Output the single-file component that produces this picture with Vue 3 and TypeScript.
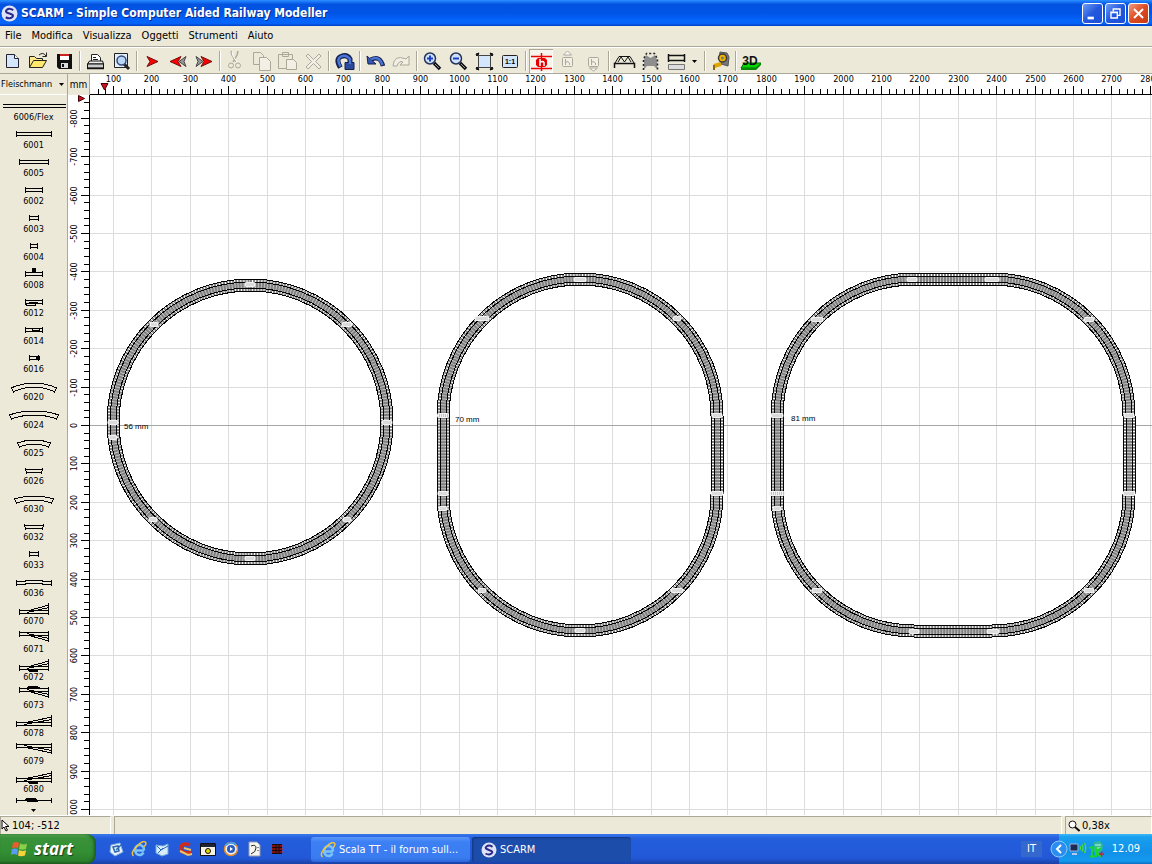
<script setup lang="ts">
interface Tool { name: string; art: string; pressed?: boolean; narrow?: boolean }
interface Part { label: string; art: string }
interface Shape { x: number; y: number; w: number; h: number }

const menus = ['File', 'Modifica', 'Visualizza', 'Oggetti', 'Strumenti', 'Aiuto']

const scissors = '<path d="M8 2l1 4 4 7M15 2l-1 4-4 7" stroke="#aca899" fill="none" stroke-width="1.500"/><path d="M9 3l1 4 4 6" stroke="#fff" fill="none"/><circle cx="8" cy="16.500" r="2.500" fill="none" stroke="#aca899"/><circle cx="15" cy="16.500" r="2.500" fill="none" stroke="#aca899"/>'
const lens = (sign: string) =>
  `<path d="M14 14l6 6" stroke="#111" stroke-width="3.500"/><path d="M15 15l4 4" stroke="#8b93a8" stroke-width="1"/><circle cx="10" cy="9.500" r="5.500" fill="#cfe2fb" stroke="#26335a" stroke-width="1.500"/><path d="${sign}" stroke="#1d3fc0" stroke-width="2" fill="none"/>`

const toolGroups: Tool[][] = [
  [
    { name: 'Nuovo', art: '<path d="M6.500 5.500h8l4 4v9h-12z" fill="#d3e6fb" stroke="#223" /><path d="M14.500 5.500v4h4" fill="#fff" stroke="#223"/>' },
    { name: 'Apri', art: '<path d="M3.500 18.500v-11h5l2 2h6v3" fill="#ffe98a" stroke="#222"/><path d="M3.500 18.500l4-7h13l-4 7z" fill="#ffe86a" stroke="#222"/><path d="M13 6q4-3.500 7 1M20.500 3.500v4h-4" fill="none" stroke="#222"/>' },
    { name: 'Salva', art: '<path d="M5 5h15v15H7l-2-2z" fill="#111"/><path d="M8 5h9v6H8z" fill="#fff"/><path d="M8 5h9v2H8z" fill="#c22"/><path d="M9 14h7v5H9z" fill="#ddd"/><path d="M10 15h2v3h-2z" fill="#111"/>' },
  ],
  [
    { name: 'Stampa', art: '<path d="M8.500 12V5.500h6l3 3V12" fill="#fff" stroke="#222"/><path d="M10 8.500h3M10 10.500h5" stroke="#222"/><path d="M6.500 12h13l1 3H4.500z" fill="#eee" stroke="#111"/><path d="M4.500 15h16v4h-16z" fill="#ccc" stroke="#111"/><path d="M4 19.500h17" stroke="#111" stroke-width="1.500"/>' },
    { name: 'Anteprima', art: '<path d="M5.500 4.500h13v14h-13z" fill="#e4eefb" stroke="#222"/><path d="M15 15l5 5" stroke="#222" stroke-width="3"/><circle cx="12.500" cy="11.500" r="4.500" fill="#b9d8f6" stroke="#36497c" stroke-width="1.500"/>' },
  ],
  [
    { name: 'Avanti', art: '<path d="M7 7.500l11 5-11 5 3-5z" fill="#f00" stroke="#701010"/>' },
    { name: 'Indietro', art: '<path d="M20 7.500l-7 5 7 5-2-5z" fill="#999" stroke="#444"/><path d="M15 7.500l-11 5 11 5-3-5z" fill="#f00" stroke="#701010"/>' },
    { name: 'Successivo', art: '<path d="M4 7.500l7 5-7 5 2-5z" fill="#999" stroke="#444"/><path d="M9 7.500l11 5-11 5 3-5z" fill="#f00" stroke="#701010"/>' },
  ],
  [
    { name: 'Taglia', art: scissors },
    { name: 'Copia', art: '<path d="M4.500 3.500h7l3 3v9h-10z" fill="#ece9d8" stroke="#aca899"/><path d="M10.500 8.500h7l4 4v9h-11z" fill="#f2f0e4" stroke="#aca899"/>' },
    { name: 'Incolla', art: '<path d="M3.500 5.500h14v14h-14zM7.500 3.500h6v4h-6z" fill="#ece9d8" stroke="#aca899"/><path d="M11.500 10.500h7l3 3v7h-10z" fill="#f2f0e4" stroke="#aca899"/>' },
    { name: 'Elimina', art: '<path d="M5 7l2-2 5.500 5.500L18 5l2 2-5.500 5.500L20 18l-2 2-5.500-5.500L7 20l-2-2 5.500-5.500z" fill="#f2f0e4" stroke="#aca899"/>' },
  ],
  [{ name: 'Ruota', art: '<path d="M8.500 18.500Q3 10 9 7.500T18 10v5" fill="none" stroke="#162050" stroke-width="5"/><path d="M13 13.500h9v7h-9z" fill="#2a4a9c" stroke="#162050"/><path d="M8.500 17.500Q4 10 9 7.500T18 10v5" fill="none" stroke="#4a76d8" stroke-width="2.500"/>' }],
  [
    { name: 'Annulla', art: '<path d="M8 10.500Q17 6 20 17" fill="none" stroke="#162050" stroke-width="4.500"/><path d="M4 7l1 8h8z" fill="#3458b8" stroke="#162050"/><path d="M8 10.500Q16 6 19.500 16" fill="none" stroke="#4a76d8" stroke-width="2.500"/>' },
    { name: 'Ripeti', art: '<path d="M20 7v9h-9l3-3q-4-2-6 4H4Q5 5 17 10z" fill="#f2f0e4" stroke="#aca899"/>' },
  ],
  [
    { name: 'Ingrandisci', art: lens('M7 9.500h6M10 6.500v6') },
    { name: 'Riduci', art: lens('M7 9.500h6') },
    { name: 'Adatta', art: '<path d="M6.500 6.500h12v12h-12z" fill="#d3e6fb"/><path d="M4 6.500h17M4 18.500h17M6.500 4v17M18.500 4v17" stroke="#444"/><path d="M4 5l3-1-2 3zM21 5l-3-1 2 3zM4 20l3 1-2-3zM21 20l-3 1 2-3z" fill="#111" stroke="#111"/>' },
    { name: 'Scala 1:1', art: '<rect x="4.500" y="6.500" width="15" height="12" rx="1" fill="#d3e6fb" stroke="#222"/><text x="12" y="15" text-anchor="middle" font-family="Liberation Sans" font-weight="700" font-size="7">1:1</text>' },
  ],
  [
    { name: 'Quota', pressed: true, art: '<path d="M2 7.500h21M2 19.500h21M12.500 4v18" stroke="#e00" stroke-width="1.500"/><path d="M9 9h7l2 2v5l-2 2H9l-2-2v-5z" fill="#e60000"/><path d="M11 10v7M11 13.500q3-2 4 0V17" stroke="#fff" stroke-width="1.500" fill="none"/>' },
    { name: 'Alza', art: '<path d="M12.500 2l4 4h-8z" fill="#fff" stroke="#aca899"/><rect x="7.500" y="8.500" width="10" height="9" rx="1" fill="#f2f0e4" stroke="#aca899"/><path d="M10.500 10v6M10.500 13q3-1 4 1v2" stroke="#aca899" fill="none"/>' },
    { name: 'Abbassa', art: '<path d="M12.500 22l4-3h-8z" fill="#fff" stroke="#aca899"/><rect x="7.500" y="8.500" width="10" height="9" rx="1" fill="#f2f0e4" stroke="#aca899"/><path d="M10.500 10v6M10.500 13q3-1 4 1v2" stroke="#aca899" fill="none"/>' },
  ],
  [
    { name: 'Ponte', art: '<path d="M2.500 19v-4.500h20V19" fill="none" stroke="#111" stroke-width="1.500"/><path d="M3 14l4-6.500h11l4 6.500M6 13l3-5 3.500 5L16 8l3 5" fill="none" stroke="#111"/>' },
    { name: 'Galleria', art: '<path d="M8 6l4.500 3L17 6l2 5v9l-3-3H9l-3 3v-9z" fill="#8e8e8e"/><path d="M5.500 21V10l3-5.500h8l3 5.500v11" fill="none" stroke="#222" stroke-width="1.500" stroke-dasharray="2 2"/>' },
    { name: 'Livelli', art: '<path d="M4 6.500h17M4 11.500h17M4.500 5v8M20.500 5v8" stroke="#111" stroke-width="1.500"/><path d="M4.500 15.500h16v5h-16z" fill="#ddd" stroke="#777"/>' },
    { name: 'Altri livelli', narrow: true, art: '<path d="M2 11h5l-2.500 3z" fill="#000"/>' },
  ],
  [{ name: 'Metro', art: '<path d="M12 3l7 1 2 4-1 9-7-2-2-5z" fill="#777" stroke="#555"/><circle cx="14.500" cy="9" r="4" fill="#f3b400" stroke="#3a3a3a" stroke-width="1.500"/><circle cx="14.500" cy="9" r="1.500" fill="#777"/><path d="M13 15l-7 2" stroke="#e2a500" stroke-width="4"/><path d="M6 16v5" stroke="#8a6a10" stroke-width="2"/>' }],
  [{ name: 'Vista 3D', art: '<path d="M5 14h17l-5 5H2z" fill="#00d800" stroke="#067006"/><path d="M2 19h15l5-5v2l-5 5H2z" fill="#078a07"/><text x="11" y="16" text-anchor="middle" font-family="Liberation Sans" font-weight="700" font-size="12" fill="#111">3D</text>' }],
]

/* ---- track parts list ---- */
const bar = (a: number, b: number, extra = '') =>
  `<path d="M${a} 8.500H${b}M${a} 11.500H${b}M${a + 0.5} 7v6M${b - 0.5} 7v6"/>${extra}`
const arc = (a: number, b: number, end: number, top: number) => {
  const c = 2 * top - end
  return `<path d="M${a} ${end}Q33 ${c} ${b} ${end}M${b - 2} ${end + 4}Q33 ${c + 4} ${a + 2} ${end + 4}M${a} ${end - 1}l3 6M${b} ${end - 1}l-3 6"/>`
}
const flat = (a: number, b: number) =>
  `<path d="M${a} 9.500H${b}M${a + 2} 12.500H${b - 2}M${a + 0.5} 8l1 6M${b - 0.5} 8l-1 6"/>`
const pointUp = (a: number, b: number, box = false) =>
  `<path d="M${a} 10.500H${b}M${a} 13.500H${b}M${a + 0.5} 9v6M${b - 0.5} 3v12M${a + 8} 12.500L${b} 7.500M${a + 10} 10.500L${b} 5"/>` +
  (box ? '<path class="solid" d="M27 14h10l-1 1.500h-7z"/>' : '')
const pointDown = (a: number, b: number, box = false) =>
  `<path d="M${a} 4.500H${b}M${a} 7.500H${b}M${a + 0.5} 3v6M${b - 0.5} 3v11M${a + 8} 5.500L${b} 10.500M${a + 10} 7.500L${b} 13"/>` +
  (box ? '<path class="solid" d="M27 3.500l2-1.500h7l2 1.500z"/>' : '')

const parts: Part[] = [
  { label: '6006/Flex', art: '<path d="M2 8.500H65M2 11.500H65"/>' },
  { label: '6001', art: bar(15, 51) },
  { label: '6005', art: bar(18, 48) },
  { label: '6002', art: bar(24, 42) },
  { label: '6003', art: bar(28, 38) },
  { label: '6004', art: bar(29, 37) },
  { label: '6008', art: bar(24, 42, '<path class="solid" d="M31.500 4.500h3v3h-3z"/>') },
  { label: '6012', art: bar(24, 42, '<path d="M25.500 11.500h9v2h-9zM28 10.500h9"/>') },
  { label: '6014', art: bar(24, 42, '<path d="M31 10.500h8M31.500 9v3M38.500 9v3"/>') },
  { label: '6016', art: bar(28, 38, '<path class="solid" d="M35.500 8.500h3v3h-3z"/>') },
  { label: '6020', art: arc(10, 56, 12, 7) },
  { label: '6024', art: arc(8, 58, 11, 7) },
  { label: '6025', art: arc(16, 50, 11, 8) },
  { label: '6026', art: flat(24, 42) },
  { label: '6030', art: arc(13, 53, 11, 8) },
  { label: '6032', art: flat(23, 43) },
  { label: '6033', art: bar(28, 38) },
  { label: '6036', art: '<path d="M15 9.500h9l1-1h16l1 1h9M15 12.500h9l1-1h16l1 1h9M15.500 8v6M50.500 8v6"/>' },
  { label: '6070', art: pointUp(18, 48) },
  { label: '6071', art: pointDown(18, 48) },
  { label: '6072', art: pointUp(18, 48, true) },
  { label: '6073', art: pointDown(18, 48, true) },
  { label: '6078', art: pointUp(15, 51) },
  { label: '6079', art: pointDown(15, 51) },
  { label: '6080', art: pointUp(15, 51, true) },
]

/* ---- plan: 0.384 px per millimetre ---- */
const SCALE = 0.384
const xAt = (mm: number) => Math.round(-15.4 + mm * SCALE) + 0.5
const yAt = (mm: number) => Math.round(330 + mm * SCALE) + 0.5
const range = (from: number, to: number, step: number) => {
  const out: number[] = []
  for (let v = from; v <= to; v += step) out.push(v)
  return out
}
const xMinor = range(60, 2800, 20)
const xMajor = range(100, 2800, 100)
const yMinor = range(-840, 1000, 20)
const yMajor = range(-800, 1000, 100)

const R = 137
const shapes: Shape[] = [
  { x: 23, y: 190, w: 274, h: 274 },
  { x: 353, y: 184, w: 274, h: 352 },
  { x: 687, y: 184, w: 352, h: 352 },
]
const rails = [-6, -3, 3, 6]

const joints: number[][] = [
  [160, 189, 11], [64, 229, 9], [23, 327, 11], [23, 342, 9], [63, 424, 9], [160, 463, 11], [257, 424, 9], [297, 327, 11], [257, 229, 11],
  [490, 184, 13], [392, 223, 15], [353, 320, 12], [353, 398, 11], [353, 413, 9], [392, 495, 9], [490, 535, 11], [587, 495, 13], [627, 398, 13], [627, 320, 11], [587, 223, 9],
  [822, 184, 11], [902, 184, 15], [727, 224, 13], [687, 320, 13], [687, 398, 16], [687, 413, 9], [727, 495, 11], [824, 536, 11], [903, 536, 13], [999, 495, 11], [1039, 398, 13], [1039, 320, 11], [999, 224, 11],
]
const notes = [
  { x: 34, y: 334, text: '56 mm' },
  { x: 365, y: 327, text: '70 mm' },
  { x: 701, y: 326, text: '81 mm' },
]

const ieArt = '<path d="M13 9.500H5M12.500 11.500Q11 14 8.500 14A4.500 5 0 1 1 13 9.500" fill="none" stroke="#7cc4f7" stroke-width="2.500"/><path d="M2.500 15Q-1 12 6 5T15 2q0 2-2 4" fill="none" stroke="#f3c33a" stroke-width="1.500"/>'
const quick: Tool[] = [
  { name: 'Mostra desktop', art: '<path d="M3 4l9-2 3 9-8 4-5-4z" fill="#e8f2fb" stroke="#7fb0dc"/><path d="M5 6l5-1 1 5-4 1zM8 9l5-5" fill="none" stroke="#2b69b0" stroke-width="1.500"/>' },
  { name: 'Internet Explorer', art: ieArt },
  { name: 'Outlook Express', art: '<path d="M2 4l7 1 5-2v10l-6 2-6-3z" fill="#d8ecfb" stroke="#6ea7dc"/><path d="M3 5l4 4 7-4M4 12l5-5" fill="none" stroke="#2466b8"/>' },
  { name: 'CCleaner', art: '<path d="M13 4Q6 1 4 6t6 6l4-1" fill="none" stroke="#d42a1c" stroke-width="3.500"/><path d="M7 7l7 2M3 10l8 4 4-1" fill="none" stroke="#e7c46a" stroke-width="2"/>' },
  { name: 'Finestra', art: '<path d="M.5 2.500h15v12H.5z" fill="#f2f2e8" stroke="#111"/><path d="M1 3h14v3H1z" fill="#223"/><circle cx="8" cy="10" r="2.500" fill="#e8d800" stroke="#111"/>' },
  { name: 'Media Player', art: '<circle cx="8" cy="8" r="6.500" fill="#e9f0fa" stroke="#e08a2a" stroke-width="1.500"/><path d="M3 4a6.500 6.500 0 0 1 10 0" fill="none" stroke="#4a9be0" stroke-width="2"/><circle cx="8" cy="8" r="4" fill="#2a5cc0"/><path d="M7 6l3 2-3 2z" fill="#fff"/>' },
  { name: 'Spartito', art: '<path d="M3 1h8l3 3v11H3z" fill="#f6f6f0" stroke="#99a"/><path d="M5 5q5-2 5 2t-5 6M12 6v1M12 9v1" fill="none" stroke="#222"/>' },
  { name: 'Chip', art: '<path d="M3 3h10v10H3z" fill="#1c0808"/><path d="M2 5h12M2 8h12M2 11h12" stroke="#e02020"/><path d="M7 3v10M10 3v10" stroke="#1c0808"/>' },
]
</script>

<template>
  <div class="app">
    <header class="title">
      <svg class="logo" viewBox="0 0 16 16"><circle cx="8" cy="8" r="7.500" fill="#dfe3f5" /><path d="M11.500 4.800Q8 2.500 5.500 4.500T8 8t2.500 3.500-6 0" fill="none" stroke="#2a2a8c" stroke-width="2" /></svg>
      <h1>SCARM - Simple Computer Aided Railway Modeller</h1>
      <button class="win" aria-label="Riduci a icona"><svg viewBox="0 0 21 21"><path d="M5 14h7v3H5z" fill="#fff" /></svg></button>
      <button class="win" aria-label="Ripristina"><svg viewBox="0 0 21 21"><path d="M8 8V5.500h7.500v7H13M8 5.500h7.500M5.500 9h7v6.500h-7zM5 9.500h8" fill="none" stroke="#fff" stroke-width="1.500" /></svg></button>
      <button class="win close" aria-label="Chiudi"><svg viewBox="0 0 21 21"><path d="M5.500 5.500l10 10M15.500 5.500l-10 10" stroke="#fff" stroke-width="2.200" /></svg></button>
    </header>

    <nav class="menu">
      <button v-for="m in menus" :key="m">{{ m }}</button>
    </nav>

    <div class="toolbar" role="toolbar">
      <template v-for="(group, i) in toolGroups" :key="i">
        <span v-if="i" class="sep"></span>
        <button v-for="t in group" :key="t.name" :class="{ pressed: t.pressed, narrow: t.narrow }" :aria-label="t.name">
          <svg :viewBox="t.narrow ? '0 0 11 24' : '0 0 24 24'" v-html="t.art"></svg>
        </button>
      </template>
    </div>

    <main class="work">
      <aside class="side">
        <div class="brand">
          <select aria-label="Libreria"><option>Fleischmann</option></select>
          <svg viewBox="0 0 5 3"><path d="M0 0h5l-2.500 3z" /></svg>
        </div>
        <div class="parts">
          <button v-for="p in parts" :key="p.label" class="part">
            <svg viewBox="0 0 66 16" v-html="p.art"></svg>
            <span>{{ p.label }}</span>
          </button>
          <button class="part" aria-label="6081"><svg viewBox="0 0 66 16"><path d="M15 4.500H51M15.500 2v5M50.500 2v5" /><path class="solid" d="M24 4l3-2h7l2 2v1H26z" /></svg></button>
        </div>
        <button class="more" aria-label="Scorri"><svg viewBox="0 0 5 3"><path d="M0 0h5l-2.500 3z" /></svg></button>
      </aside>

      <section class="plan">
        <div class="unit">mm</div>
        <svg class="ruler-x">
          <g class="ticks">
            <line v-for="v in xMinor" :key="v" :x1="xAt(v)" :x2="xAt(v)" y1="15" y2="21" />
            <line v-for="v in xMajor" :key="v" :x1="xAt(v)" :x2="xAt(v)" y1="12" y2="21" />
            <line x1="0" x2="100%" y1="20.5" y2="20.5" />
          </g>
          <text v-for="v in xMajor" :key="v" :x="xAt(v)" y="8">{{ v }}</text>
          <path d="M11 9.500h7L14.500 16z" class="mark" />
        </svg>
        <svg class="ruler-y">
          <g class="ticks">
            <line v-for="v in yMinor" :key="v" :y1="yAt(v)" :y2="yAt(v)" x1="16" x2="22" />
            <line v-for="v in yMajor" :key="v" :y1="yAt(v)" :y2="yAt(v)" x1="13" x2="22" />
            <line x1="21.5" x2="21.5" y1="0" y2="100%" />
          </g>
          <text v-for="v in yMajor" :key="v" :transform="`translate(9 ${yAt(v)}) rotate(-90)`">{{ v }}</text>
          <path d="M10.500 .500v6l6-3z" class="mark" />
        </svg>
        <svg class="canvas">
          <g class="grid">
            <line v-for="v in xMajor" :key="v" :x1="xAt(v)" :x2="xAt(v)" y1="0" y2="100%" />
            <line v-for="v in yMajor" :key="v" :class="{ zero: v === 0 }" :y1="yAt(v)" :y2="yAt(v)" x1="0" x2="100%" />
          </g>
          <g v-for="(s, i) in shapes" :key="i" class="track">
            <rect class="bed" :x="s.x" :y="s.y" :width="s.w" :height="s.h" :rx="R" />
            <rect class="ties" :x="s.x" :y="s.y" :width="s.w" :height="s.h" :rx="R" />
            <rect class="core" :x="s.x" :y="s.y" :width="s.w" :height="s.h" :rx="R" />
            <rect v-for="o in rails" :key="o" class="rail" :x="s.x - o" :y="s.y - o" :width="s.w + 2 * o" :height="s.h + 2 * o" :rx="R + o" />
          </g>
          <g v-for="(j, i) in joints" :key="i" class="joint">
            <rect :x="j[0] - j[2] / 2" :y="j[1] - 2" :width="j[2]" height="5" rx="2" />
            <line :x1="j[0] - j[2] / 2 + 2" :x2="j[0] + j[2] / 2 - 1" :y1="j[1] + 0.5" :y2="j[1] + 0.5" />
          </g>
          <text v-for="n in notes" :key="n.text" :x="n.x" :y="n.y">{{ n.text }}</text>
        </svg>
      </section>
    </main>

    <footer class="status">
      <div class="pos">
        <svg viewBox="0 0 9 13"><path d="M1 1v9l2-2 2 4 1.500-.800-2-3.700H8z" fill="#fff" stroke="#000" /></svg>
        104; -512
      </div>
      <div class="info"></div>
      <div class="zoom">
        <svg viewBox="0 0 12 12"><circle cx="4.500" cy="4.500" r="3.500" fill="#fff" stroke="#111" /><path d="M7 7l4.500 4" stroke="#111" stroke-width="2" /></svg>
        0,38x
      </div>
    </footer>

    <div class="taskbar">
      <button class="start">
        <svg viewBox="0 0 20 18">
          <path d="M3 3q3-2 6 0L8 8.500q-3-2-6 0z" fill="#f0592a" /><path d="M10 3.500q4 2 7 0L16 9q-4 1.500-7 0z" fill="#8cd04a" />
          <path d="M1.800 9.500q3-2 6 0L7 15q-3-2-6 0z" fill="#5a9cf5" /><path d="M9 10q4 2 7 0l-1 5.500q-4 1.500-7 0z" fill="#f8d23c" />
        </svg>
        <em>start</em>
      </button>
      <div class="quick">
        <button v-for="q in quick" :key="q.name" :aria-label="q.name"><svg viewBox="0 0 16 16" v-html="q.art"></svg></button>
      </div>
      <div class="tasks">
        <button class="task"><svg viewBox="0 0 16 16" v-html="ieArt"></svg>Scala TT - il forum sull...</button>
        <button class="task active"><svg viewBox="0 0 16 16"><circle cx="8" cy="8" r="7.500" fill="#dfe3f5" /><path d="M11.500 4.800Q8 2.500 5.500 4.500T8 8t2.500 3.500-6 0" fill="none" stroke="#2a2a8c" stroke-width="2" /></svg>SCARM</button>
      </div>
      <span class="lang">IT</span>
      <div class="tray">
        <button class="expand" aria-label="Mostra icone nascoste"><svg viewBox="0 0 18 18"><circle cx="9" cy="9" r="8" fill="#2a8df0" stroke="#8cc8fa" /><path d="M11 5L7 9l4 4" fill="none" stroke="#fff" stroke-width="2" /></svg></button>
        <svg class="net" viewBox="0 0 18 16"><path d="M1 3h8v7H1z" fill="#1d2a52" stroke="#9db6dc" /><path d="M3 12h5v2H3z" fill="#b8c8e8" /><path d="M11 5q1 2 0 4M13 3.500q2 3.500 0 7M15.500 2q2.500 5 0 10" fill="none" stroke="#4be03c" stroke-width="1.300" /></svg>
        <svg class="kas" viewBox="0 0 16 18"><path d="M6 2l6-1 3 4-1 6-5 3-4-3z" fill="#2fb89a" /><path d="M7 5h6M8 8h5" stroke="#c8f5ea" /><path d="M1 8l3-1v9M2 16.500h5M8 7v10M13 8l-5 4 5 5" fill="none" stroke="#18d828" stroke-width="1.800" /><path d="M11 14h5M13.500 11.500v5" stroke="#d82020" stroke-width="1.500" /></svg>
        <time>12.09</time>
      </div>
    </div>
  </div>
</template>

<style>
html, body { height: 100%; overflow: hidden; }
</style>

<style scoped>
.app {
  height: 100vh;
  display: flex;
  flex-direction: column;
  background: #ece9d8;
  color: #000;
  font: 11px/14px "DejaVu Sans Condensed", "Noto Sans", sans-serif;
  overflow: hidden;
}
button { border: 0; padding: 0; margin: 0; background: none; font: inherit; color: inherit; }
svg { display: block; }

.title {
  flex: none;
  height: 26px;
  display: flex;
  align-items: center;
  gap: 2px;
  padding: 0 3px 0 1px;
  background: linear-gradient(#2b90ff 0, #1672f5 8%, #0453e0 16%, #0054e6 50%, #0464fb 78%, #0463f8 90%, #003fc4 100%);
}
.title .logo { width: 17px; height: 17px; }
.title h1 {
  flex: 1;
  min-width: 0;
  margin: 0 0 0 1px;
  overflow: hidden;
  white-space: nowrap;
  color: #fff;
  font: 700 12px/20px "DejaVu Sans Condensed", sans-serif;
  text-shadow: 1px 1px 0 #0a2a8a;
}
.win {
  flex: none;
  width: 21px;
  height: 21px;
  border: 1px solid #fff;
  border-radius: 3px;
  background: linear-gradient(135deg, #6e9cf5, #2358dd 50%, #1a50d8);
}
.win svg { width: 19px; height: 19px; }
.win.close { background: linear-gradient(135deg, #f09a7c, #dd4a22 50%, #c83a12); }

.menu {
  flex: none;
  height: 20px;
  display: flex;
  align-items: center;
  gap: 10px;
  padding: 0 5px;
  border-bottom: 1px solid #aca899;
  box-shadow: 0 1px 0 #fff;
}
.menu button { line-height: 18px; }

.toolbar {
  flex: none;
  height: 25px;
  margin-top: 1px;
  display: flex;
  align-items: center;
  gap: 2px;
  border-bottom: 1px solid #aca899;
}
.toolbar button { flex: none; width: 24px; height: 24px; }
.toolbar svg { width: 24px; height: 24px; }
.toolbar .narrow, .toolbar .narrow svg { width: 11px; }
.toolbar .pressed { background: #f6f4ec; box-shadow: inset 1px 1px 0 #aca899, inset -1px -1px 0 #fff; }
.sep { flex: none; width: 3px; height: 20px; background: linear-gradient(90deg, transparent 1px, #aca899 1px 2px, #fff 2px); }

.work { flex: 1; min-height: 0; display: flex; }
.side {
  flex: none;
  width: 67px;
  display: flex;
  flex-direction: column;
  border-right: 1px solid #aca899;
  font: 9px/11px "DejaVu Sans Condensed", sans-serif;
}
.brand { position: relative; flex: none; height: 21px; border-bottom: 1px solid #fff; box-sizing: border-box; }
.brand select {
  width: 100%;
  height: 20px;
  padding: 0 0 0 1px;
  border: 0;
  appearance: none;
  background: none;
  font: inherit;
  color: inherit;
}
.brand svg { position: absolute; right: 3px; top: 9px; width: 5px; height: 3px; }
.parts { flex: 1; min-height: 0; overflow: hidden; padding-top: 1px; }
.part { display: flex; flex-direction: column; align-items: center; justify-content: flex-start; width: 100%; height: 28px; }
.part svg { flex: none; width: 66px; height: 16px; overflow: visible; shape-rendering: crispEdges; fill: none; stroke: #000; }
.part :deep(.solid) { fill: #000; }
.part span { line-height: 11px; }
.more { flex: none; height: 10px; display: flex; justify-content: center; align-items: center; }
.more svg { width: 5px; height: 3px; }

.plan {
  flex: 1;
  min-width: 0;
  display: grid;
  grid-template: 21px 1fr / 22px 1fr;
  background: #fff;
}
.plan > svg { width: 100%; height: 100%; overflow: hidden; min-height: 0; }
.plan > .ruler-x { overflow: visible; }
.unit { background: #ece9d8; border-right: 1px solid #aca899; text-align: center; font-size: 10px; line-height: 21px; }
.ruler-x text, .ruler-y text { font: 9px "DejaVu Sans Condensed", sans-serif; text-anchor: middle; }
.ticks { stroke: #000; shape-rendering: crispEdges; }
.mark { fill: #d01020; stroke: #400; stroke-width: 1; }
.grid { stroke: #dcdcdc; shape-rendering: crispEdges; }
.grid .zero { stroke: #a6a6a6; }
.track rect { fill: none; shape-rendering: crispEdges; }
.track .bed { stroke: #fff; stroke-width: 12; }
.track .ties { stroke: #808080; stroke-width: 12; stroke-dasharray: 2 1; shape-rendering: geometricPrecision; }
.track .core { stroke: #808080; stroke-width: 5; stroke-opacity: 0.5; shape-rendering: geometricPrecision; }
.track .rail { stroke: #000; stroke-width: 1; }
.joint rect { fill: #f2f2f2; }
.joint line { stroke: #c4c4c4; stroke-width: 3; stroke-dasharray: 1 1; }
.canvas text { font: 8px "Liberation Sans", sans-serif; }

.status {
  flex: none;
  height: 19px;
  display: flex;
  gap: 3px;
  border-top: 1px solid #fff;
  box-sizing: border-box;
}
.status div { display: flex; align-items: center; gap: 2px; border-top: 1px solid #aca899; border-left: 1px solid #aca899; border-right: 1px solid #fff; box-sizing: border-box; }
.pos { width: 111px; }
.pos svg { width: 9px; height: 13px; }
.info { flex: 1; }
.zoom { width: 87px; padding-left: 2px; }
.zoom svg { width: 12px; height: 12px; }

.taskbar {
  flex: none;
  height: 30px;
  display: flex;
  align-items: stretch;
  color: #fff;
  background: linear-gradient(#3a78e8 0, #2f6ee8 6%, #245edb 15%, #2258d8 80%, #1941a5 100%);
}
.start {
  flex: none;
  width: 96px;
  display: flex;
  align-items: center;
  gap: 4px;
  padding-left: 10px;
  border-radius: 0 9px 9px 0;
  background: linear-gradient(#5fad5c 0, #3a923a 12%, #338f33 60%, #2c7f2c 90%, #1f5f1f 100%);
  box-shadow: inset -2px 0 3px #1d5a1d;
}
.start svg { width: 20px; height: 18px; }
.start em { font: italic 700 17px/24px "Open Sans", "Noto Sans", sans-serif; text-shadow: 1px 1px 1px #16401a; }
.quick { flex: none; width: 203px; margin-left: 12px; display: flex; align-items: center; gap: 7px; }
.quick svg { width: 16px; height: 16px; }
.tasks { flex: 1; min-width: 0; display: flex; gap: 2px; padding: 3px 0 2px; }
.task {
  flex: 0 1 159px;
  display: flex;
  align-items: center;
  gap: 3px;
  padding-left: 9px;
  border-radius: 3px;
  background: linear-gradient(#5a96f8, #3c80f4 20%, #3a7bf0 85%, #2c66d8);
  white-space: nowrap;
  overflow: hidden;
}
.task.active { background: #1d4dab; box-shadow: inset 1px 1px 2px #123680; }
.task svg { flex: none; width: 16px; height: 16px; }
.lang { align-self: center; margin-right: 17px; padding: 0 6px; background: #3568cc; line-height: 16px; }
.tray {
  flex: none;
  width: 93px;
  display: flex;
  align-items: center;
  padding-right: 4px;
  box-sizing: border-box;
  background: linear-gradient(#3fb8f8 0, #18a0ee 10%, #1290e8 60%, #139aee 90%, #0d6fc0 100%);
}
.expand { margin-left: -9px; }
.expand svg { width: 18px; height: 18px; }
.net { width: 18px; height: 16px; margin-left: 1px; }
.kas { width: 16px; height: 18px; margin-left: 1px; }
.tray time { flex: 1; text-align: center; line-height: 16px; }
</style>
